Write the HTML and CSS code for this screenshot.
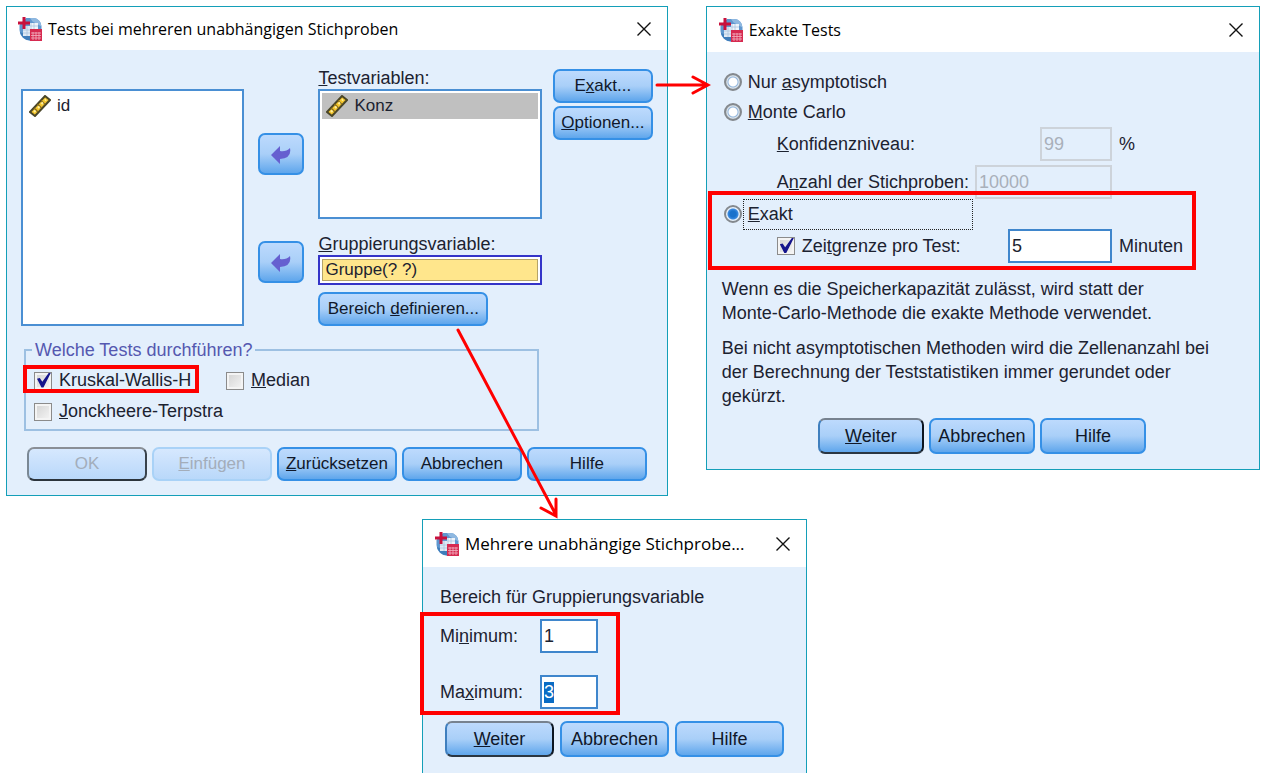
FILE: index.html
```html
<!DOCTYPE html>
<html lang="de">
<head>
  <meta charset="UTF-8" />
  <meta name="viewport" content="width=device-width, initial-scale=1.0"/>
  <title>Tests bei mehreren unabhängigen Stichproben</title>
  <link rel="stylesheet" href="styles.css">
</head>
<body>
  <!-- shared icons -->
  <svg class="sprite" aria-hidden="true">
    <symbol id="logo" viewBox="0 0 24 24">
      <path d="M8 1h7a8.500 8.500 0 0 1 8.500 8.500V14a9.500 9.500 0 0 1-9.500 9.500h-2A10.500 10.500 0 0 1 1.500 13V8z" fill="#5f97cf"/>
      <path d="M12 1h3a8.500 8.500 0 0 1 8.500 8.500l-9-5z" fill="#8fb8e0"/>
      <path d="M2 15a11 11 0 0 0 10 8.500l1-4z" fill="#3f7dba"/>
      <path d="M5 9h13v10H5z" fill="#dfe9f4"/>
      <path d="M12 6h8v6h-8z" fill="#eef4fa"/>
      <path d="M5 13h13M5 16h13M9 9v10M13 6v13M16 6v7M12 9h8" stroke="#a9c4e0" stroke-width="0.800" fill="none"/>
      <path d="M4.500 0h3v4.500H12v3H7.500V12h-3V7.500H0v-3h4.500z" fill="#c8103c"/>
      <path d="M12 12h12v12H12z" fill="#d62a50"/>
      <path d="M13 16h10M13 18.500h10M13 21h10M15 15v8M18 15v8M21 15v8" stroke="#f3b3c2" stroke-width="0.800" fill="none"/>
    </symbol>
    <symbol id="ruler" viewBox="0 0 22 22">
      <path d="M1 17L16 1l5 4L6 21z" fill="#f3c52c" stroke="#4a4628" stroke-width="2"/>
      <path d="M5 13l4 4M8.500 9l4 4M12 5.500l4 4" stroke="#8a6d1c" stroke-width="1.500"/>
      <path d="M5 17l1.500-1.500M9 13l1.500-1.500M12.500 9l1.500-1.500M16 5.500l1-1" stroke="#fff0a0" stroke-width="2"/>
    </symbol>
    <symbol id="back" viewBox="0 0 20 18">
      <path d="M0 9l9-9v5q6 1 10-3 2 10-10 11v5z" fill="#6660d0"/>
    </symbol>
    <symbol id="close" viewBox="0 0 16 16">
      <path d="M1.500 1.500l13 13M14.500 1.500l-13 13" stroke="#111" stroke-width="1.400" fill="none"/>
    </symbol>
  </svg>

  <main class="desktop">
    <div class="top-row">

      <section class="dialog dialog-main">
        <header class="titlebar">
          <svg class="logo"><use href="#logo"/></svg>
          <h1>Tests bei mehreren unabhängigen Stichproben</h1>
          <button class="close" aria-label="Schließen"><svg><use href="#close"/></svg></button>
        </header>
        <div class="dialog-body">
          <div class="variables">
            <ul class="list source-list">
              <li><svg class="ruler"><use href="#ruler"/></svg>id</li>
            </ul>
            <div class="movers">
              <button class="btn mover" aria-label="Testvariable verschieben"><svg><use href="#back"/></svg></button>
              <button class="btn mover" aria-label="Gruppierungsvariable verschieben"><svg><use href="#back"/></svg></button>
            </div>
            <div class="targets">
              <span class="caption"><u>T</u>estvariablen:</span>
              <ul class="list target-list">
                <li class="selected"><svg class="ruler"><use href="#ruler"/></svg>Konz</li>
              </ul>
              <label class="caption" for="group"><u>G</u>ruppierungsvariable:</label>
              <div class="group-frame"><input type="text" id="group" value="Gruppe(? ?)"></div>
              <div class="anchor define">
                <button class="btn">Bereich <u>d</u>efinieren...</button>
                <svg class="arrow arrow-down" viewBox="0 0 110 196"><path d="M3 2L101 187M86 180L101 188L101 171"/></svg>
              </div>
            </div>
            <div class="side-buttons">
              <div class="anchor">
                <button class="btn">E<u>x</u>akt...</button>
                <svg class="arrow arrow-right" viewBox="0 0 56 22"><path d="M2 11H52M38 3L53 11L38 19"/></svg>
              </div>
              <button class="btn"><u>O</u>ptionen...</button>
            </div>
          </div>

          <fieldset class="tests">
            <legend>Welche Tests durchführen?</legend>
            <label class="check marked"><input type="checkbox" checked><span>Kruskal-Wallis-H</span></label>
            <label class="check"><input type="checkbox"><span><u>M</u>edian</span></label>
            <label class="check"><input type="checkbox"><span><u>J</u>onckheere-Terpstra</span></label>
          </fieldset>

          <div class="buttons">
            <button class="btn default" disabled>OK</button>
            <button class="btn" disabled><u>E</u>infügen</button>
            <button class="btn"><u>Z</u>urücksetzen</button>
            <button class="btn">Abbrechen</button>
            <button class="btn">Hilfe</button>
          </div>
        </div>
      </section>

      <section class="dialog dialog-exact">
        <header class="titlebar">
          <svg class="logo"><use href="#logo"/></svg>
          <h2>Exakte Tests</h2>
          <button class="close" aria-label="Schließen"><svg><use href="#close"/></svg></button>
        </header>
        <div class="dialog-body">
          <label class="radio"><input type="radio" name="method"><span>Nur <u>a</u>symptotisch</span></label>
          <label class="radio"><input type="radio" name="method"><span><u>M</u>onte Carlo</span></label>
          <div class="option">
            <label for="confidence"><u>K</u>onfidenzniveau:</label>
            <input type="text" class="short" id="confidence" value="99" disabled>
            <span class="unit">%</span>
          </div>
          <div class="option">
            <label for="samples">A<u>n</u>zahl der Stichproben:</label>
            <input type="text" class="long" id="samples" value="10000" disabled>
            <span class="unit"></span>
          </div>
          <div class="exact-group">
            <label class="radio"><input type="radio" name="method" checked><span class="focused"><u>E</u>xakt</span></label>
            <div class="option">
              <label class="check"><input type="checkbox" checked><span>Zei<u>t</u>grenze pro Test:</span></label>
              <input type="text" class="medium" value="5" aria-label="Zeitgrenze in Minuten">
              <span class="unit">Minuten</span>
            </div>
          </div>
          <p>Wenn es die Speicherkapazität zulässt, wird statt der<br>Monte-Carlo-Methode die exakte Methode verwendet.</p>
          <p>Bei nicht asymptotischen Methoden wird die Zellenanzahl bei<br>der Berechnung der Teststatistiken immer gerundet oder<br>gekürzt.</p>
          <div class="buttons">
            <button class="btn default"><u>W</u>eiter</button>
            <button class="btn">Abbrechen</button>
            <button class="btn">Hilfe</button>
          </div>
        </div>
      </section>
    </div>

    <section class="dialog dialog-range">
      <header class="titlebar">
        <svg class="logo"><use href="#logo"/></svg>
        <h2>Mehrere unabhängige Stichprobe...</h2>
        <button class="close" aria-label="Schließen"><svg><use href="#close"/></svg></button>
      </header>
      <div class="dialog-body">
        <p>Bereich für Gruppierungsvariable</p>
        <div class="range-group">
          <label for="min">Mi<u>n</u>imum:</label>
          <input type="text" id="min" value="1">
          <label for="max">Ma<u>x</u>imum:</label>
          <input type="text" id="max" value="3">
        </div>
        <div class="buttons">
          <button class="btn default"><u>W</u>eiter</button>
          <button class="btn">Abbrechen</button>
          <button class="btn">Hilfe</button>
        </div>
      </div>
    </section>
  </main>

  <script>
    const max = document.getElementById('max');
    max.focus({ preventScroll: true });
    max.select();
  </script>
</body>
</html>
```
FILE: styles.css
```css
* {
  box-sizing: border-box;
}

body {
  margin: 0;
  background: #fff;
  color: #1c2230;
  font-family: "Liberation Sans", Arial, sans-serif;
  font-size: 18px;
}

.sprite {
  position: absolute;
  width: 0;
  height: 0;
}

.desktop {
  padding: 6px 5px 6px 6px;
}

.top-row {
  display: flex;
  align-items: flex-start;
  gap: 38px;
}

/* windows */
.dialog {
  border: 1px solid #149fb8;
  background: #e3effc;
}

.dialog-main {
  flex: 662 1 0;
}

.dialog-exact {
  flex: 554 1 0;
}

.dialog-range {
  width: 385px;
  margin: 23px 0 0 416px;
  border-bottom: none;
}

.titlebar {
  display: flex;
  align-items: center;
  gap: 6px;
  height: 44px;
  padding: 0 15px 0 12px;
  background: #fff;
  color: #000;
}

.titlebar h1,
.titlebar h2 {
  flex: 1;
  margin: 0;
  font-family: "Open Sans", "Noto Sans", sans-serif;
  font-size: 16px;
  font-weight: normal;
  white-space: nowrap;
}

.dialog-range .titlebar {
  height: 47px;
}

.dialog-range .titlebar h2 {
  font-size: 17px;
}

.logo {
  width: 24px;
  height: 24px;
}

.close {
  width: 16px;
  height: 16px;
  padding: 0;
  border: none;
  background: none;
}

.close svg {
  display: block;
  width: 16px;
  height: 16px;
}

/* buttons */
.btn {
  height: 34px;
  padding: 0;
  border: 2px solid #3590e6;
  border-radius: 7px;
  background: linear-gradient(#bddafd, #a9cff8 50%, #5fa6ec);
  color: #10182a;
  font-family: inherit;
  font-size: inherit;
  white-space: nowrap;
}

.btn.default {
  border-color: #77828f #0c1520 #2a3642 #3f7fbe;
}

.btn:disabled {
  border-color: #a9d2f7;
  background: linear-gradient(#d6e8fe, #b9d8fa);
  color: #a3adba;
}

.btn.default:disabled {
  border-color: #8a8f96 #38424c #2c343c #7a8894;
}

.buttons {
  display: flex;
  justify-content: center;
  gap: 5px;
}

.anchor {
  position: relative;
}

.arrow {
  position: absolute;
  fill: none;
  stroke: #f00;
  stroke-width: 3;
  stroke-linecap: round;
  pointer-events: none;
}

/* form parts */
input[type="text"] {
  height: 34px;
  padding: 0 2px;
  border: 2px solid #3f86cc;
  background: #fff;
  color: #1c2230;
  font-family: inherit;
  font-size: inherit;
  outline: none;
}

input[type="text"]:disabled {
  border-color: #cdd3da;
  background: transparent;
  color: #a9b0ba;
}

input::selection {
  background: #0a6cc4;
  color: #fff;
}

.check,
.radio {
  display: flex;
  align-items: center;
}

input[type="checkbox"] {
  appearance: none;
  position: relative;
  width: 18px;
  height: 18px;
  margin: 0 7px 0 0;
  border: 1px solid #8b8b8b;
  background: linear-gradient(135deg, #d2d2d2, #f6f6f6);
  box-shadow: inset 0 0 0 2px #f4f4f4;
}

input[type="checkbox"]:checked::after {
  content: "";
  position: absolute;
  inset: 0 0 1px 2px;
  background: #14148c;
  clip-path: polygon(0 42%, 20% 36%, 38% 62%, 86% 0, 100% 0, 46% 100%, 32% 100%);
}

input[type="radio"] {
  appearance: none;
  width: 18px;
  height: 18px;
  margin: 0 6px 0 0;
  border: 2px solid #84898e;
  border-radius: 50%;
  background: radial-gradient(circle, #fff 4px, #8fb4dc 5px, #dfe6ec 6px, #b9c3cc 7px);
}

input[type="radio"]:checked {
  background: radial-gradient(circle, #1a72cc 3px, #3a8ae0 5px, #e6f0fa 6px);
}

/* main dialog */
.dialog-main .titlebar {
  height: 43px;
  padding-left: 11px;
}

.dialog-main .dialog-body {
  padding: 19px 14px 14px;
}

.variables {
  display: grid;
  grid-template-columns: 1fr 46px 1fr 97px;
  column-gap: 14px;
}

.list {
  margin: 0;
  padding: 2px;
  border: 2px solid #4a8fd3;
  background: #fff;
  font-size: 17px;
  list-style: none;
}

.list li {
  display: flex;
  align-items: center;
  gap: 6px;
  height: 26px;
  padding-left: 4px;
}

.list .selected {
  background: #c0c0c0;
}

.ruler {
  width: 22px;
  height: 22px;
}

.source-list {
  margin-top: 20px;
}

.movers {
  display: flex;
  flex-direction: column;
  gap: 66px;
  padding-top: 64px;
}

.mover {
  height: 42px;
}

.mover svg {
  width: 20px;
  height: 18px;
  vertical-align: middle;
}

.caption {
  display: block;
  height: 20px;
  line-height: 18px;
}

.target-list {
  height: 130px;
  margin-bottom: 16px;
}

.group-frame {
  height: 30px;
  padding: 2px;
  border: 2px solid #3434c8;
  background: #fff;
}

.group-frame input[type="text"] {
  display: block;
  width: 100%;
  height: 22px;
  border-width: 1px;
  border-color: #b5a468;
  background: #ffe68c;
  font-size: 17px;
}

.dialog-main .btn {
  font-size: 17px;
}

.define {
  width: 170px;
  margin-top: 7px;
}

.define .btn {
  display: block;
  width: 100%;
}

.side-buttons {
  display: flex;
  flex-direction: column;
  gap: 3px;
  margin-left: -3px;
}

.side-buttons .btn {
  display: block;
  width: 100%;
}

.arrow-right {
  top: 5px;
  left: 102px;
  width: 56px;
  height: 22px;
}

.arrow-down {
  top: 36px;
  left: 137px;
  z-index: 1;
  width: 110px;
  height: 196px;
}

.tests {
  display: grid;
  grid-template-columns: 192px 1fr;
  grid-auto-rows: 31px;
  margin: 14px 114px 0 3px;
  padding: 5px 9px 2px 8px;
  border: 2px solid #9dc0e2;
}

.tests legend {
  margin-left: -2px;
  padding: 0 3px;
  color: #5558b0;
  line-height: 20px;
}

.marked {
  position: relative;
}

.marked::after,
.exact-group::after,
.range-group::after {
  content: "";
  position: absolute;
  border: 4px solid #f00;
  pointer-events: none;
}

.marked::after {
  inset: 0 27px 3px -11px;
}

.dialog-main .buttons {
  margin: 16px 6px 0;
}

.dialog-main .buttons .btn {
  flex: 1;
}

/* exact tests */
.dialog-exact .titlebar {
  height: 45px;
}

.dialog-exact .dialog-body {
  padding: 15px 19px 15px 17px;
}

.radio {
  height: 30px;
}

.option {
  display: flex;
  align-items: center;
  padding-left: 53px;
}

.option + .option {
  margin-top: 4px;
}

.option label {
  flex: 1;
}

.option .short {
  width: 72px;
}

.option .medium {
  width: 104px;
}

.option .long {
  width: 137px;
}

.unit {
  width: 128px;
  padding-left: 7px;
}

.exact-group {
  position: relative;
  margin-bottom: 14px;
}

.exact-group::after {
  inset: -8px 44px -7px -16px;
}

.focused {
  width: 230px;
  margin-left: -5px;
  padding: 4px;
  border: 1px dotted #222;
}

.dialog-exact p {
  margin: 11px 0 0 -2px;
  line-height: 24px;
}

.dialog-exact .buttons {
  margin-top: 10px;
}

.dialog-exact .buttons .btn {
  width: 106px;
  height: 36px;
}

/* range dialog */
.dialog-range .dialog-body {
  padding: 18px 17px 16px;
}

.dialog-range p {
  margin: 0 0 10px;
  line-height: 24px;
}

.range-group {
  position: relative;
  display: grid;
  grid-template-columns: 100px 58px;
  row-gap: 22px;
  align-items: center;
}

.range-group::after {
  inset: -7px 169px -6px -20px;
}

.dialog-range .buttons {
  gap: 6px;
  margin-top: 12px;
}

.dialog-range .buttons .btn {
  width: 109px;
  height: 36px;
}
```
